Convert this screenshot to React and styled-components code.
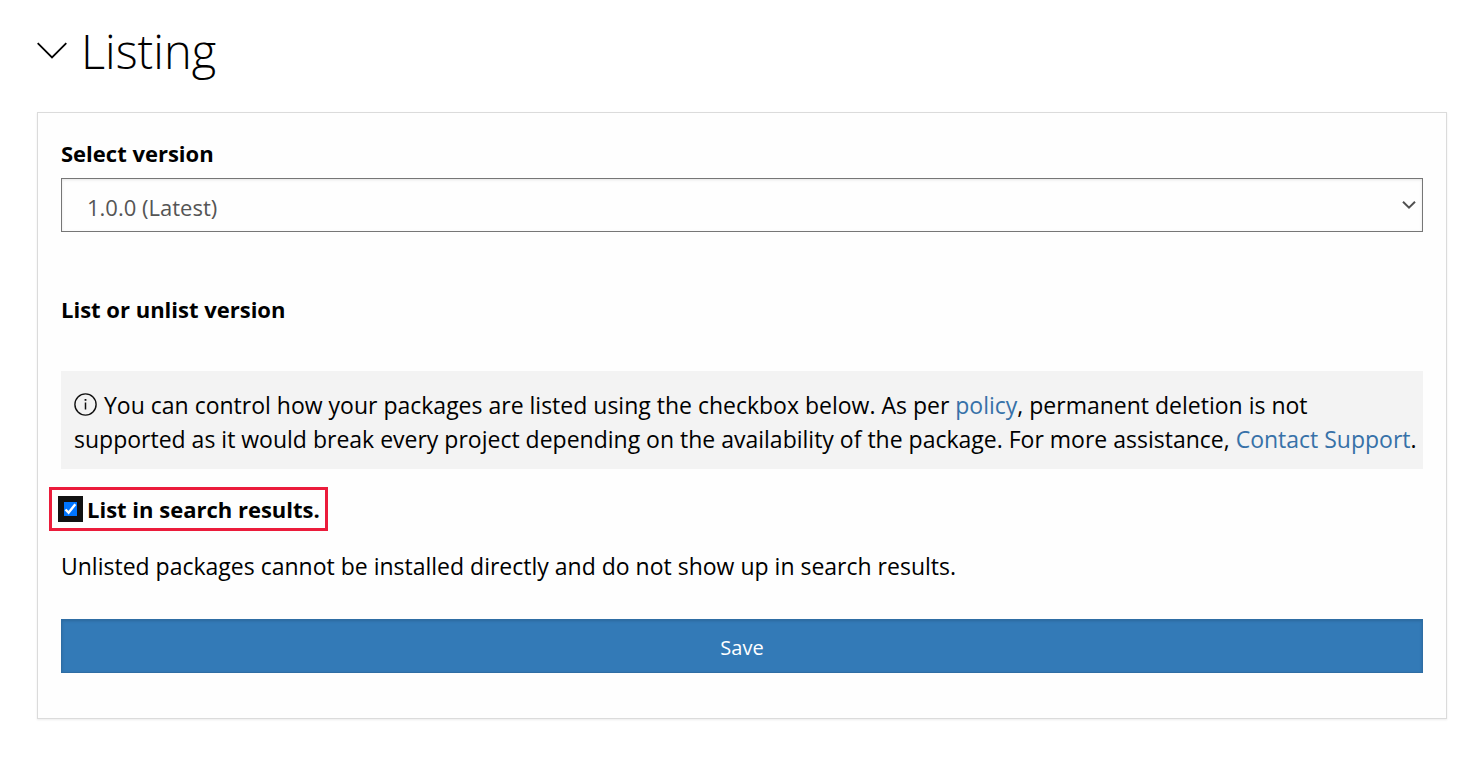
import React, { useState } from "react";
import styled, { createGlobalStyle } from "styled-components";

const GlobalStyle = createGlobalStyle`
  *, *::before, *::after { box-sizing: border-box; }
  body {
    margin: 0;
    background: #fff;
    color: #000;
    font-family: "Segoe UI", "Open Sans", "Noto Sans", sans-serif;
    font-size: 23px;
    line-height: 34px;
  }
`;

const Page = styled.main`
  padding: 15px 37px 38px;
`;

const Heading = styled.h1`
  margin: 0 0 25px;
  font-size: 47px;
  line-height: 72px;
  font-weight: 300;
`;

const Toggle = styled.button`
  display: flex;
  align-items: center;
  gap: 14px;
  padding: 0;
  border: 0;
  background: none;
  color: inherit;
  font: inherit;
  cursor: pointer;
`;

const HeadingChevron = styled.svg`
  width: 30px;
  height: 18px;
  fill: none;
  stroke: #000;
  stroke-width: 1.8;
`;

const Card = styled.form`
  display: flex;
  flex-direction: column;
  padding: 23px 23px 45px;
  border: 1px solid #dbdbdb;
  background: #fefefe;
  box-shadow: 0 1px 2px rgba(0, 0, 0, 0.08);
`;

const FieldLabel = styled.label`
  margin-bottom: 8px;
  font-size: 22px;
  font-weight: 700;
`;

const SectionTitle = styled.h2`
  margin: 60px 0 45px;
  font-size: 22px;
  line-height: 34px;
  font-weight: 700;
`;

const SelectBox = styled.div`
  display: grid;
  align-items: center;
  > * { grid-area: 1 / 1; }
`;

const Select = styled.select`
  appearance: none;
  width: 100%;
  height: 54px;
  padding: 4px 40px 0 25px;
  border: 1px solid #767676;
  border-radius: 0;
  background: #fefefe;
  box-shadow: inset 0 1px 3px rgba(0, 0, 0, 0.1);
  color: #555;
  font: inherit;
  font-size: 22px;
`;

const SelectChevron = styled.svg`
  justify-self: end;
  width: 14px;
  height: 8px;
  margin-right: 7px;
  fill: none;
  stroke: #505050;
  stroke-width: 2;
  pointer-events: none;
`;

const Notice = styled.p`
  margin: 0 0 18px;
  padding: 17px 0 13px 13px;
  background: #f3f3f3;
`;

const InfoIcon = styled.svg`
  width: 23px;
  height: 23px;
  margin-right: 7px;
  vertical-align: -2px;
  fill: none;
  stroke: #111;
`;

const Link = styled.a`
  color: #3771a8;
  text-decoration: none;
`;

const ListedOption = styled.label`
  display: flex;
  align-items: center;
  align-self: flex-start;
  gap: 4px;
  height: 44px;
  margin-left: -12px;
  padding: 0 5px 0 6px;
  border: 3px solid #eb1c3b;
  font-size: 22px;
  font-weight: 700;
`;

const Tick = styled.span`
  display: grid;
  width: 25px;
  height: 26px;
  place-items: center;
  background: #111;
  > * { grid-area: 1 / 1; }
`;

const TickInput = styled.input`
  appearance: none;
  width: 13px;
  height: 14px;
  margin: 0;
  background: #fff;
  &:checked { background: #0075ff; }
`;

const TickMark = styled.svg`
  width: 13px;
  height: 14px;
  fill: none;
  stroke: #fff;
  stroke-width: 2.4;
  pointer-events: none;
`;

const HelpText = styled.p`
  margin: 18px 0 36px;
`;

const SaveButton = styled.button`
  height: 54px;
  padding: 4px 12px 0;
  border: 1px solid #2e6da4;
  background: #337ab7;
  box-shadow: inset 0 1px 3px rgba(0, 0, 0, 0.15);
  color: #fff;
  font: inherit;
  font-size: 20px;
  cursor: pointer;
`;

export default function App() {
  const [open, setOpen] = useState(true);
  const [listed, setListed] = useState(true);

  return (
    <>
      <GlobalStyle />
      <Page>
        <Heading>
          <Toggle type="button" aria-expanded={open} onClick={() => setOpen(!open)}>
            <HeadingChevron viewBox="0 0 30 18" aria-hidden="true">
              <path d="M0.7 1.2 L15 15.5 L29.3 1.2" />
            </HeadingChevron>
            Listing
          </Toggle>
        </Heading>
        {open && (
          <Card onSubmit={(event) => event.preventDefault()}>
            <FieldLabel htmlFor="version">Select version</FieldLabel>
            <SelectBox>
              <Select id="version" defaultValue="1.0.0">
                <option value="1.0.0">1.0.0 (Latest)</option>
              </Select>
              <SelectChevron viewBox="0 0 14 8" aria-hidden="true">
                <path d="M1 0.8 L7 6.6 L13 0.8" />
              </SelectChevron>
            </SelectBox>
            <SectionTitle>List or unlist version</SectionTitle>
            <Notice>
              <InfoIcon viewBox="0 0 23 23" aria-hidden="true">
                <circle cx="11.5" cy="11.5" r="10.6" strokeWidth="1.4" />
                <path d="M11.5 9.5 V16.5" strokeWidth="1.5" />
                <path d="M11.5 6 V7.8" strokeWidth="1.8" />
              </InfoIcon>
              You can control how your packages are listed using the checkbox below. As per{" "}
              <Link href="#policy">policy</Link>, permanent deletion is not supported as it would
              break every project depending on the availability of the package. For more
              assistance, <Link href="#support">Contact Support</Link>.
            </Notice>
            <ListedOption>
              <Tick>
                <TickInput
                  type="checkbox"
                  checked={listed}
                  onChange={(event) => setListed(event.target.checked)}
                />
                {listed && (
                  <TickMark viewBox="0 0 13 14" aria-hidden="true">
                    <path d="M1.5 7.5 L4.6 10.7 L11.3 2.2" />
                  </TickMark>
                )}
              </Tick>
              List in search results.
            </ListedOption>
            <HelpText>
              Unlisted packages cannot be installed directly and do not show up in search results.
            </HelpText>
            <SaveButton type="submit">Save</SaveButton>
          </Card>
        )}
      </Page>
    </>
  );
}
